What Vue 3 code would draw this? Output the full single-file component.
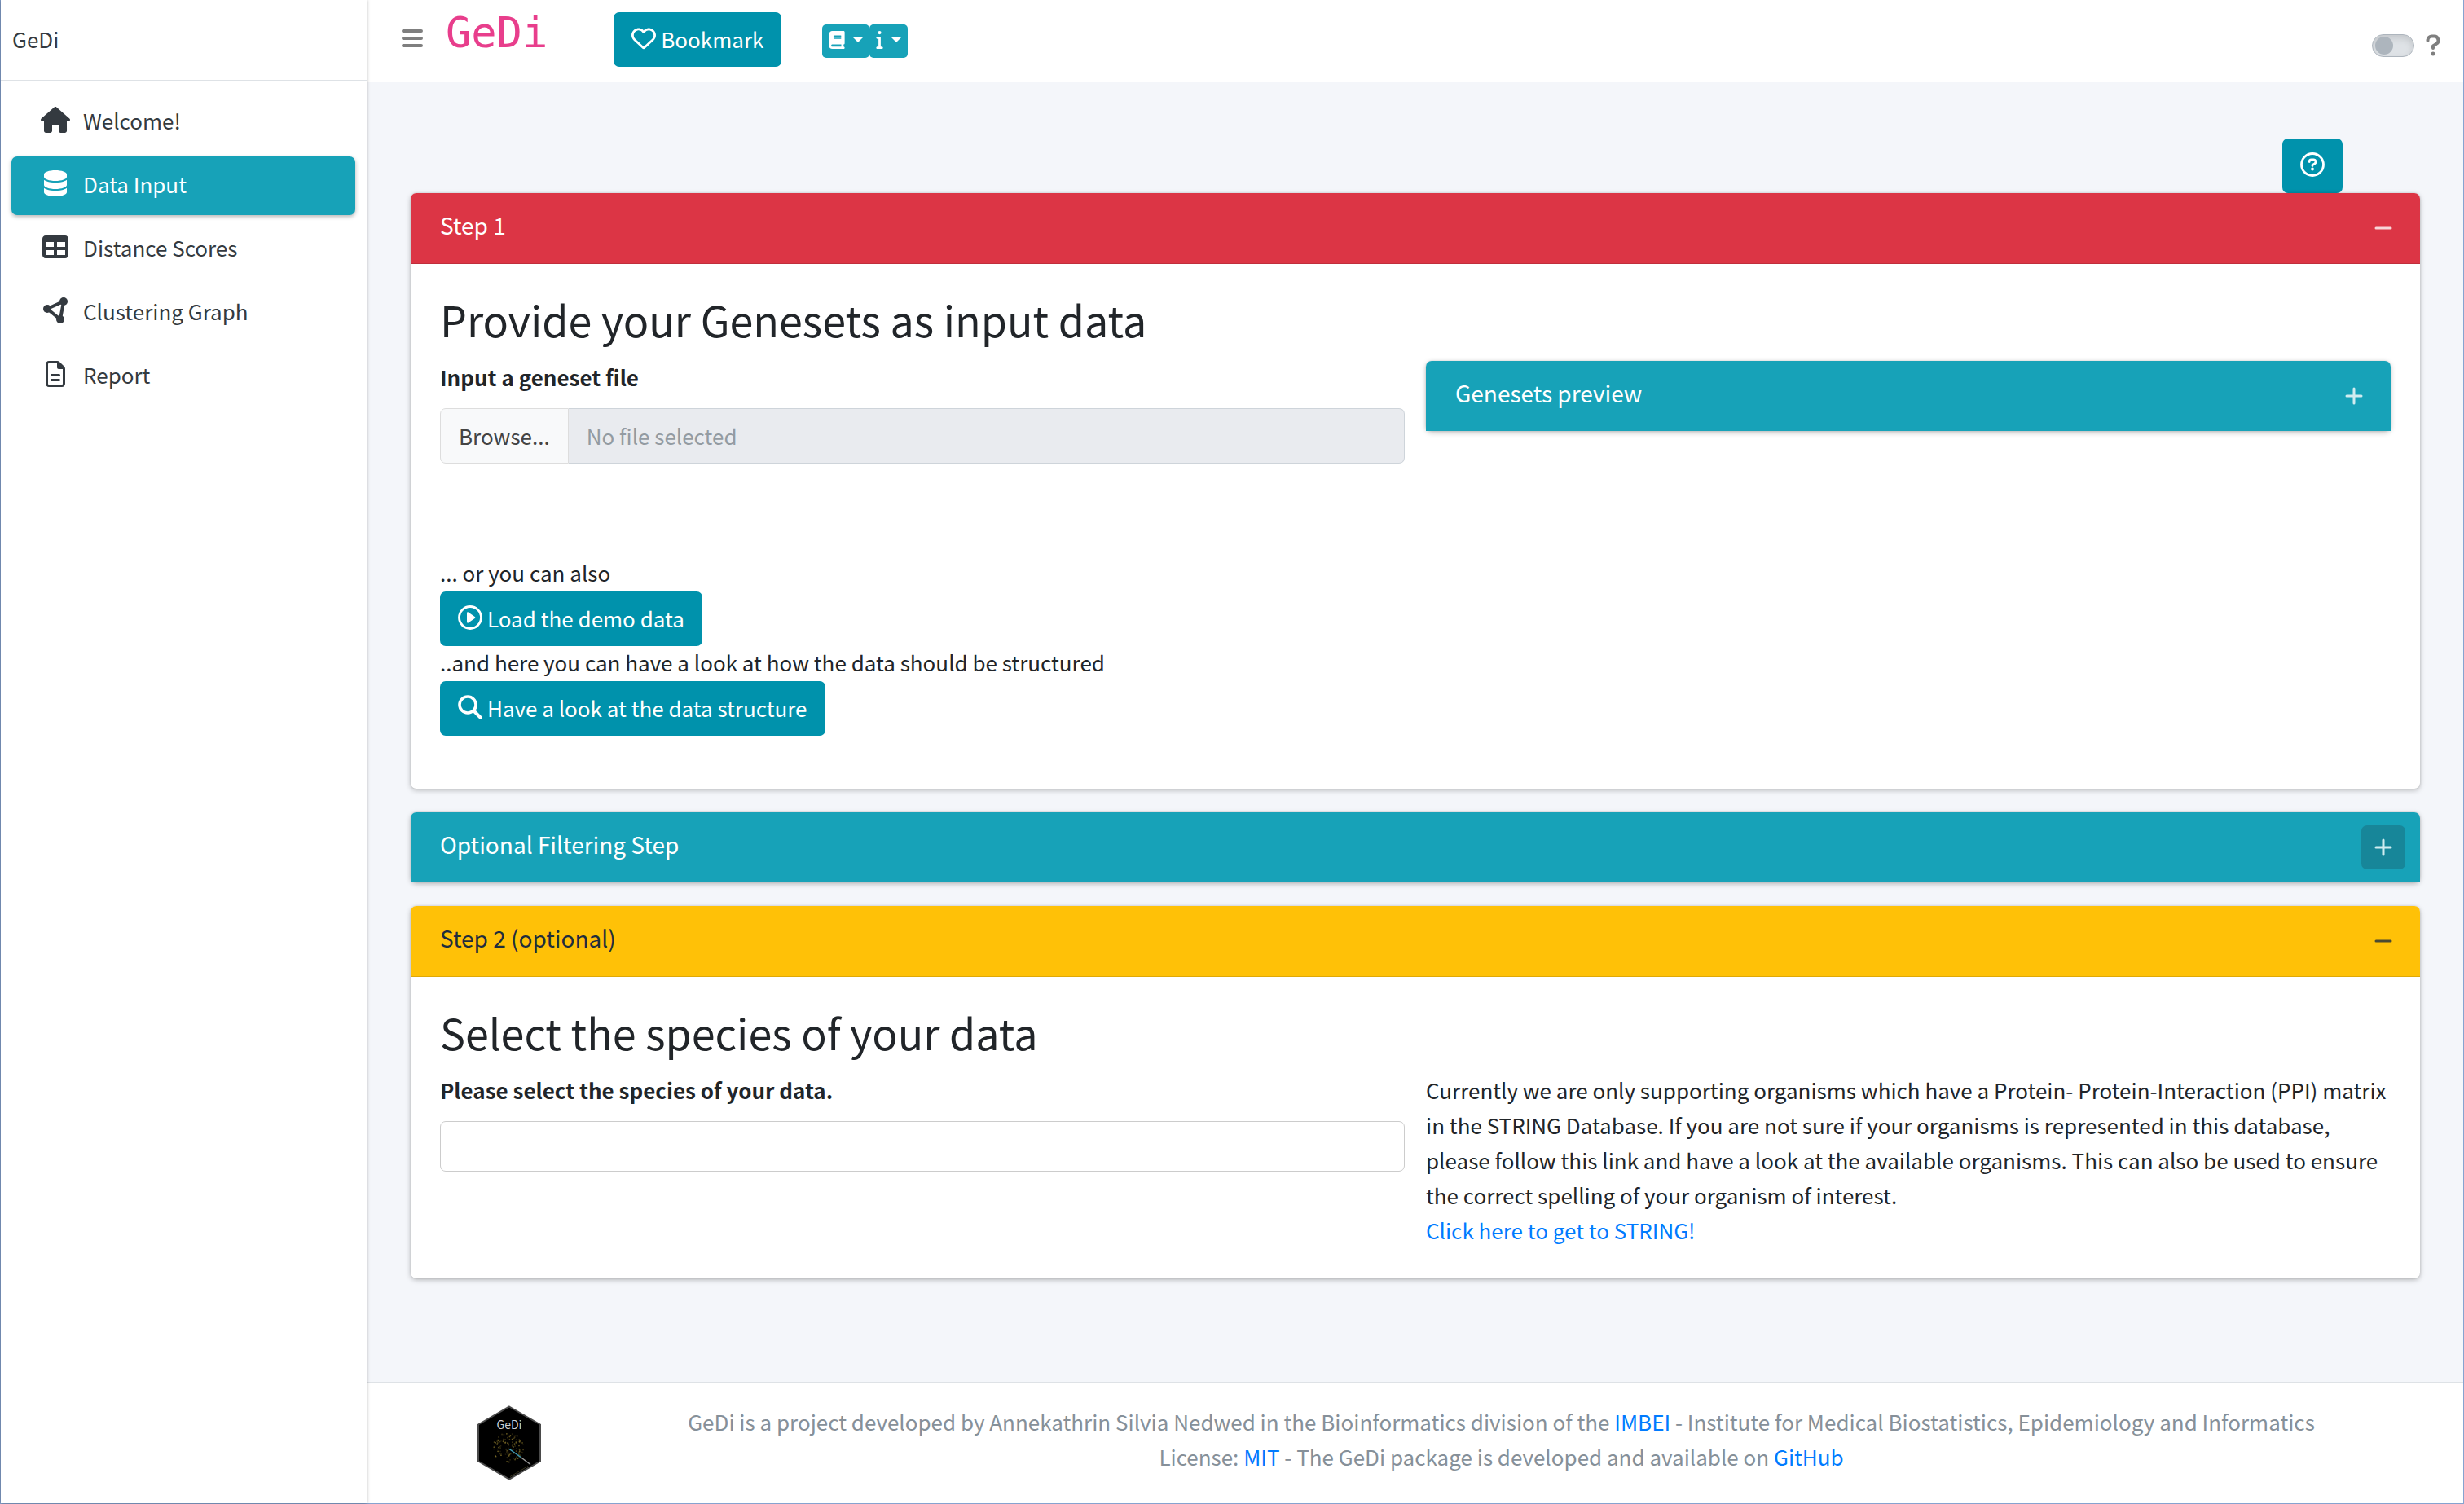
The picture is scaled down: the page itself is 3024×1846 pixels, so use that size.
<script setup>
import { ref } from 'vue'

const dark = ref(false)
const nav = [
  { label: 'Welcome!', icon: 'home' },
  { label: 'Data Input', icon: 'database', active: true },
  { label: 'Distance Scores', icon: 'table' },
  { label: 'Clustering Graph', icon: 'graph' },
  { label: 'Report', icon: 'file' }
]
const specks = Array.from({ length: 110 }, (_, i) => {
  const a = i * i * 1.7
  const r = Math.sqrt(i / 110) * 19
  return { x: 38 + Math.cos(a) * r, y: 52 + Math.sin(a) * r, o: 0.2 + (i % 7) * 0.09 }
})
</script>

<template>
  <div class="app">
    <aside class="sidebar">
      <a class="brand" href="#">GeDi</a>
      <nav class="menu">
        <a v-for="item in nav" :key="item.label" href="#" class="item" :class="{ active: item.active }">
          <span class="item-icon">
            <svg v-if="item.icon === 'home'" width="36" height="32" viewBox="0 0 576 512"><path fill="currentColor" d="M575.8 255.5c0 18-15 32.100-32 32.100h-32l.7 160.200c0 2.700-.2 5.400-.5 8.100V472c0 22.100-17.900 40-40 40H392c-22 0-40-18-40-40V376c0-17.700-14-24-32-24h-64c-18 0-32 6-32 24v96c0 22-18 40-40 40H104c-22 0-40-18-40-40V287.600H32c-18 0-32-14-32-32.100 0-9 3-17 10-24L266.400 8c7-7 15-8 22-8s15 2 21 7l255.400 224.500c8 7 12 15 11 24z"/></svg>
            <svg v-else-if="item.icon === 'database'" width="28" height="32" viewBox="0 0 448 512"><path fill="currentColor" d="M448 80v48c0 44.200-100.300 80-224 80S0 172.200 0 128V80C0 35.800 100.300 0 224 0s224 35.800 224 80zM393.200 214.700c20.800-7.400 39.900-16.900 54.800-28.600V288c0 44.200-100.300 80-224 80S0 332.200 0 288V186.100c14.900 11.800 34 21.200 54.800 28.600C99.700 230.700 159.500 240 224 240s124.300-9.300 169.200-25.300zM0 346.100c14.900 11.800 34 21.200 54.800 28.600C99.700 390.700 159.500 400 224 400s124.300-9.300 169.200-25.300c20.800-7.400 39.900-16.900 54.800-28.600V432c0 44.200-100.300 80-224 80S0 476.200 0 432V346.100z"/></svg>
            <svg v-else-if="item.icon === 'table'" width="32" height="32" viewBox="0 0 512 512"><path fill="currentColor" fill-rule="evenodd" d="M64 32h384c35 0 64 29 64 64v320c0 35-29 64-64 64H64c-35 0-64-29-64-64V96c0-35 29-64 64-64zm0 128v96h160v-96zm224 0v96h160v-96zM64 320v96h160v-96zm224 0v96h160v-96z"/></svg>
            <svg v-else-if="item.icon === 'graph'" width="32" height="34" viewBox="0 0 32 34"><g fill="none" stroke="currentColor" stroke-width="4"><path d="M6 15 26 6 22 28z"/></g><g fill="currentColor"><circle cx="6" cy="15" r="5"/><circle cx="26" cy="6" r="5"/><circle cx="22" cy="28" r="5"/></g></svg>
            <svg v-else width="24" height="32" viewBox="0 0 384 512"><path fill="currentColor" d="M64 464c-8.800 0-16-7.200-16-16V64c0-8.800 7.200-16 16-16h160v80c0 17.700 14.300 32 32 32h80v288c0 8.800-7.200 16-16 16H64zM64 0C28.700 0 0 28.700 0 64v384c0 35.300 28.700 64 64 64h256c35.300 0 64-28.700 64-64V154.500c0-17-6.700-33.300-18.700-45.300l-90.600-90.500C262.700 6.700 246.500 0 229.500 0H64zm56 256c-13.300 0-24 10.700-24 24s10.700 24 24 24h144c13.300 0 24-10.700 24-24s-10.700-24-24-24H120zm0 96c-13.300 0-24 10.700-24 24s10.700 24 24 24h144c13.300 0 24-10.700 24-24s-10.700-24-24-24H120z"/></svg>
          </span>
          <span>{{ item.label }}</span>
        </a>
      </nav>
    </aside>

    <div class="page">
      <header class="topbar">
        <button class="burger" aria-label="Toggle menu">
          <svg width="26" height="24" viewBox="0 0 26 24"><path d="M2 3h22M2 12h22M2 21h22" stroke="#7f7f7f" stroke-width="4" stroke-linecap="round"/></svg>
        </button>
        <code class="title">GeDi</code>
        <button class="btn bookmark">
          <svg width="30" height="30" viewBox="0 0 512 512"><path fill="currentColor" d="M225.800 468.200l-2.500-2.300L48.100 303.200C17.400 274.700 0 234.700 0 192.800v-3.300c0-70.400 50-130.800 119.200-144C158.600 37.900 198.900 47 231 69.600c9 6.400 17.400 13.800 25 22.300 4.200-4.800 8.700-9.200 13.500-13.300 3.700-3.200 7.500-6.200 11.500-9C313.100 47 353.400 37.900 392.800 45.400 462 58.600 512 119.100 512 189.500v3.300c0 41.900-17.400 81.900-48.100 110.400L288.700 465.900l-2.500 2.300c-8.200 7.600-19 11.900-30.200 11.900s-22-4.200-30.200-11.900zM239.100 145c-.4-.3-.7-.7-1-1.100l-17.800-20c-23.100-25.900-58-37.700-92-31.200C81.600 101.500 48 142.100 48 189.500v3.300c0 28.500 11.900 55.800 32.800 75.200L256 430.700 431.200 268c20.900-19.400 32.800-46.700 32.800-75.200v-3.300c0-47.300-33.600-88-80.100-96.900-34-6.500-69 5.400-92 31.200l-17.800 20c-.3.400-.7.700-1 1.100-4.500 4.500-10.600 7-16.900 7s-12.400-2.500-16.900-7z"/></svg>
          Bookmark
        </button>
        <div class="tools">
          <button class="tool" aria-label="Documentation">
            <svg width="20" height="22" viewBox="0 0 448 512"><path fill="currentColor" d="M96 0C43 0 0 43 0 96v320c0 53 43 96 96 96h320c17.700 0 32-14.300 32-32s-14.300-32-32-32v-64c17.700 0 32-14.300 32-32V32c0-17.700-14.300-32-32-32H96zm0 384h256v64H96c-17.700 0-32-14.300-32-32s14.300-32 32-32zm32-240c0-8.800 7.200-16 16-16h192c8.800 0 16 7.200 16 16s-7.200 16-16 16H144c-8.800 0-16-7.200-16-16zm16 48h192c8.800 0 16 7.200 16 16s-7.200 16-16 16H144c-8.800 0-16-7.200-16-16s7.200-16 16-16z"/></svg>
            <span class="caret"></span>
          </button>
          <button class="tool" aria-label="Information">
            <svg width="9" height="22" viewBox="0 0 192 512"><path fill="currentColor" d="M48 48a48 48 0 1 1 96 0 48 48 0 1 1-96 0zM0 192c0-17.700 14.300-32 32-32h64c17.700 0 32 14.300 32 32v256h32c17.700 0 32 14.300 32 32s-14.300 32-32 32H32c-17.700 0-32-14.300-32-32s14.300-32 32-32h32V224H32c-17.700 0-32-14.300-32-32z"/></svg>
            <span class="caret"></span>
          </button>
        </div>
        <div class="right">
          <input v-model="dark" class="switch" type="checkbox" aria-label="Dark mode">
          <button class="help-link" aria-label="Help">
            <svg width="18" height="28" viewBox="0 0 18 28"><path d="M2.500 8V7a5 5 0 0 1 5-4.500h3a5 5 0 0 1 2.500 9.300L9 14.500V17" fill="none" stroke="#7f7f7f" stroke-width="4" stroke-linecap="round" stroke-linejoin="round"/><circle cx="9" cy="24" r="2.500" fill="#7f7f7f"/></svg>
          </button>
        </div>
      </header>

      <main class="content">
        <div class="tour">
          <button class="btn" aria-label="Start tour">
            <svg width="30" height="30" viewBox="0 0 30 30" fill="none" stroke="currentColor"><circle cx="15" cy="15" r="13.500" stroke-width="2.800"/><path d="M11.200 11.500a2.500 2.500 0 0 1 2.500-2.500h2.600a2.600 2.600 0 0 1 1.300 4.900L15 15.500v1" stroke-width="2.800" stroke-linecap="round"/><circle cx="15" cy="20.500" r="1.900" fill="currentColor" stroke="none"/></svg>
          </button>
        </div>

        <section class="card">
          <header class="card-head red">
            <h3>Step 1</h3>
            <button class="tool-btn" aria-label="Collapse"><svg width="22" height="22" viewBox="0 0 22 22"><path d="M2 11h18" stroke="currentColor" stroke-width="3" stroke-linecap="round"/></svg></button>
          </header>
          <div class="card-body">
            <h2>Provide your Genesets as input data</h2>
            <div class="cols">
              <div class="col">
                <label class="label" for="geneset">Input a geneset file</label>
                <div class="file">
                  <button class="browse">Browse...</button>
                  <input id="geneset" class="file-name" type="text" placeholder="No file selected" readonly>
                </div>
                <p>... or you can also</p>
                <button class="btn">
                  <svg width="30" height="30" viewBox="0 0 30 30"><circle cx="15" cy="15" r="13.500" fill="none" stroke="currentColor" stroke-width="2.800"/><path d="M11 9.500v11c0 1 .9 1.400 1.700 1l8-5.500c.8-.5.8-1.500 0-2l-8-5.500c-.8-.4-1.700 0-1.700 1z" fill="currentColor"/></svg>
                  Load the demo data
                </button>
                <p>..and here you can have a look at how the data should be structured</p>
                <button class="btn">
                  <svg width="30" height="30" viewBox="0 0 30 30" fill="none" stroke="currentColor"><circle cx="12" cy="12" r="10" stroke-width="3.600"/><path d="M19.500 19.500 28 28" stroke-width="4" stroke-linecap="round"/></svg>
                  Have a look at the data structure
                </button>
              </div>
              <div class="col">
                <section class="card">
                  <header class="card-head teal">
                    <h3>Genesets preview</h3>
                    <button class="tool-btn" aria-label="Expand"><svg width="22" height="22" viewBox="0 0 22 22"><path d="M2 11h18M11 2v18" stroke="currentColor" stroke-width="3" stroke-linecap="round"/></svg></button>
                  </header>
                </section>
              </div>
            </div>
          </div>
        </section>

        <section class="card">
          <header class="card-head teal">
            <h3>Optional Filtering Step</h3>
            <button class="tool-btn focused" aria-label="Expand"><svg width="22" height="22" viewBox="0 0 22 22"><path d="M2 11h18M11 2v18" stroke="currentColor" stroke-width="3" stroke-linecap="round"/></svg></button>
          </header>
        </section>

        <section class="card">
          <header class="card-head yellow">
            <h3>Step 2 (optional)</h3>
            <button class="tool-btn" aria-label="Collapse"><svg width="22" height="22" viewBox="0 0 22 22"><path d="M2 11h18" stroke="currentColor" stroke-width="3" stroke-linecap="round"/></svg></button>
          </header>
          <div class="card-body">
            <h2>Select the species of your data</h2>
            <div class="cols">
              <div class="col">
                <label class="label" for="species">Please select the species of your data.</label>
                <input id="species" class="species" type="text">
              </div>
              <div class="col info">
                <p>Currently we are only supporting organisms which have a Protein- Protein-Interaction (PPI) matrix in the STRING Database. If you are not sure if your organisms is represented in this database, please follow this link and have a look at the available organisms. This can also be used to ensure the correct spelling of your organism of interest.</p>
                <p><a href="#">Click here to get to STRING!</a></p>
              </div>
            </div>
          </div>
        </section>
      </main>

      <footer class="footer">
        <div class="logo">
          <svg width="78" height="92" viewBox="0 0 78 91">
            <path d="M39 1 77 23v45L39 90 1 68V23z" fill="#000" stroke="#4a4a4a" stroke-width="2"/>
            <circle v-for="(s, i) in specks" :key="i" :cx="s.x" :cy="s.y" r="0.9" fill="#8c7a2c" :opacity="s.o"/>
            <path d="m39 53 14 10" stroke="#3d9ab5" stroke-width="1.500"/>
            <path d="m53 63 12 9" stroke="#9a9a9a" stroke-width="1.500"/>
            <path d="m40 87 22-13" stroke="#3a3620" stroke-width="1"/>
            <text x="39" y="28" text-anchor="middle" font-size="14" fill="#d0d0d0">GeDi</text>
          </svg>
        </div>
        <div class="credits">
          <p>GeDi is a project developed by Annekathrin Silvia Nedwed in the Bioinformatics division of the <a href="#">IMBEI</a> - Institute for Medical Biostatistics, Epidemiology and Informatics</p>
          <p>License: <a href="#">MIT</a> - The GeDi package is developed and available on <a href="#">GitHub</a></p>
        </div>
      </footer>
    </div>
  </div>
</template>

<style>
body {
  margin: 0;
}
</style>

<style scoped>
* {
  box-sizing: border-box;
}
.app {
  display: flex;
  min-height: 100vh;
  border: 1px solid #86a3d0;
  border-top: 0;
  background: #f4f6fa;
  color: #212529;
  font-family: "Noto Sans CJK SC", "Noto Sans", sans-serif;
  font-size: 26px;
  line-height: 43px;
}
button,
input {
  font: inherit;
}
button {
  border: 0;
  padding: 0;
  background: none;
  color: inherit;
  cursor: pointer;
}
svg {
  display: block;
  flex: none;
}
h2,
h3,
p {
  margin: 0;
  font-weight: 400;
}
/* The family's glyphs sit low in their line box; lift running text to its optical centre. */
p {
  margin: -2px 0 2px;
}
a {
  color: #007bff;
  text-decoration: none;
}

.sidebar {
  position: relative;
  flex: none;
  width: 449px;
  background: #fff;
  box-shadow: 0 0 4px rgba(0, 0, 0, 0.4);
}
.brand {
  display: flex;
  align-items: center;
  height: 99px;
  padding: 0 0 3px 14px;
  border-bottom: 1px solid #dee2e6;
  color: #343a40;
}
.menu {
  display: flex;
  flex-direction: column;
  gap: 6px;
  padding: 15px 14px 0 13px;
}
.item {
  display: flex;
  align-items: center;
  gap: 11px;
  height: 72px;
  padding: 0 0 6px 30px;
  border-radius: 7px;
  color: #343a40;
}
.item-icon {
  display: flex;
  justify-content: center;
  width: 47px;
}
.item.active {
  background: #17a2b8;
  color: #fff;
  box-shadow: 0 2px 5px rgba(0, 0, 0, 0.3);
}

.page {
  display: flex;
  flex: 1;
  flex-direction: column;
  min-width: 0;
}
.topbar {
  display: flex;
  align-items: flex-start;
  height: 101px;
  padding: 15px 28px 0 43px;
  background: #fff;
}
.burger {
  margin-top: 20px;
}
.title {
  margin: 0 81px 0 28px;
  color: #e83e8c;
  font-family: "DejaVu Sans Mono", monospace;
  font-size: 52px;
  line-height: 50px;
}
.btn {
  display: flex;
  align-items: center;
  gap: 6px;
  height: 67px;
  padding: 0 22px 3px;
  border-radius: 7px;
  background: #0092ac;
  color: #fff;
}
.tools {
  display: flex;
  margin: 15px 0 0 50px;
}
.tool {
  display: flex;
  align-items: center;
  gap: 10px;
  height: 41px;
  padding: 0 8px 3px;
  border-radius: 5px;
  background: #17a2b8;
  color: #fff;
}
.caret {
  border: 6px solid transparent;
  border-top-color: #fff;
  border-bottom: 0;
}
.right {
  display: flex;
  gap: 14px;
  margin: 27px 0 0 auto;
}
.switch {
  display: flex;
  align-items: center;
  appearance: none;
  width: 52px;
  height: 28px;
  margin: 0;
  padding: 0 3px;
  border: 1px solid #adb5bd;
  border-radius: 14px;
  background: #dee2e6;
  box-shadow: inset 0 4px 8px rgba(0, 0, 0, 0.12);
}
.switch::before {
  content: "";
  width: 22px;
  height: 22px;
  border-radius: 50%;
  background: #adb5bd;
}
.switch:checked {
  justify-content: flex-end;
}

.content {
  display: flex;
  flex: 1;
  flex-direction: column;
  gap: 29px;
  padding: 69px 53px 0 54px;
}
.tour {
  display: flex;
  justify-content: flex-end;
  margin-bottom: -29px;
  padding-right: 95px;
}
.card {
  border-radius: 7px;
  background: #fff;
  box-shadow: 0 0 2px rgba(0, 0, 0, 0.15), 0 2px 6px rgba(0, 0, 0, 0.25);
}
.card-head {
  display: flex;
  align-items: center;
  justify-content: space-between;
  height: 87px;
  padding: 0 18px 0 36px;
  border-bottom: 1px solid rgba(0, 0, 0, 0.125);
  border-radius: 7px 7px 0 0;
  color: #fff;
}
.card-head h3 {
  padding-bottom: 7px;
  font-size: 28px;
}
.red {
  background: #dc3545;
}
.teal {
  height: 86px;
  border-bottom: 0;
  background: #17a2b8;
}
.yellow {
  background: #ffc107;
  color: #1f2d3d;
}
.tool-btn {
  display: flex;
  align-items: center;
  justify-content: center;
  width: 54px;
  height: 54px;
  border-radius: 7px;
  opacity: 0.8;
}
.tool-btn.focused {
  background: rgba(25, 105, 120, 0.6);
}
.card-body {
  padding: 36px;
}
h2 {
  margin-bottom: 20px;
  font-size: 52px;
  line-height: 63px;
}
.cols {
  display: flex;
  gap: 26px;
}
.col {
  flex: 1;
  min-width: 0;
}
.label {
  display: block;
  margin-bottom: 18px;
  font-weight: 700;
  line-height: 40px;
}
.file {
  display: flex;
  height: 68px;
  margin-bottom: 114px;
}
.browse {
  padding: 0 22px 2px;
  border: 1px solid #ddd;
  border-radius: 7px 0 0 7px;
  background: #f8f9fa;
  color: #444;
}
.file-name {
  flex: 1;
  min-width: 0;
  padding: 0 22px 2px;
  border: 1px solid #ced4da;
  border-left: 0;
  border-radius: 0 7px 7px 0;
  background: #e9ebef;
}
.file-name::placeholder {
  color: #939ba2;
  opacity: 1;
}
.col > .btn:last-child {
  margin-bottom: 29px;
}
.species {
  display: block;
  width: 100%;
  height: 62px;
  padding: 0 20px;
  border: 1px solid #ccc;
  border-radius: 7px;
  background: #fff;
}

.footer {
  display: flex;
  padding: 28px 109px 28px 29px;
  border-top: 1px solid #dee2e6;
  background: #fff;
  color: #869099;
}
.logo {
  display: flex;
  flex: none;
  justify-content: center;
  width: 292px;
}
.credits {
  flex: 1;
  text-align: center;
}
</style>
